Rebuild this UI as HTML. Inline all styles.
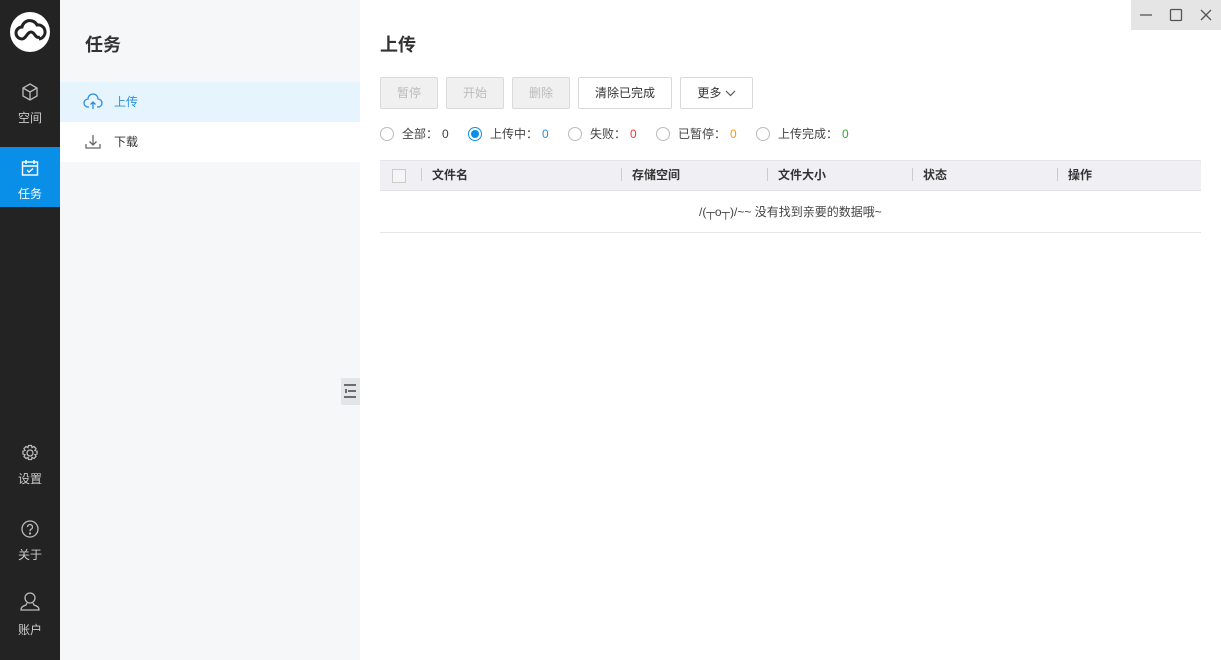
<!DOCTYPE html>
<html><head><meta charset="utf-8"><style>
*{margin:0;padding:0;box-sizing:border-box}
body{width:1221px;height:660px;overflow:hidden;font-family:"Liberation Sans","Noto Sans CJK SC",sans-serif;background:#fff;position:relative;color:#333}
.nav{position:absolute;left:0;top:0;width:60px;height:660px;background:#232323}
.logo{position:absolute;left:10px;top:12px;width:40px;height:40px;border-radius:50%;background:#fff}
.ni{position:absolute;left:0;width:60px;text-align:center;color:#ccc;font-size:12px}
.ni svg{display:block;margin:0 auto 7px}
.side{position:absolute;left:60px;top:0;width:300px;height:660px;background:#f6f7f9}
.ab{position:absolute;font-size:12px}
.btn{position:absolute;top:77px;height:32px;border:1px solid #d9d9d9;border-radius:2px;font-size:12px;text-align:center;line-height:30px;background:#fff;color:#333}
.dis{background:#f0f0f0;color:#bbb;border-color:#d9d9d9}
.rad{position:absolute;top:127px;width:14px;height:14px;border:1px solid #bbb;border-radius:50%;background:#fff}
.rl{position:absolute;top:127px;font-size:12px;line-height:15px;color:#444}
.th{position:absolute;top:166px;font-size:12px;font-weight:bold;color:#333}
.sep{position:absolute;top:168px;width:1px;height:13px;background:#ccc}
</style></head><body>
<div class="nav">
 <div class="logo"><svg width="40" height="40" viewBox="0 0 40 40"><path d="M12 27a6 6 0 0 1 0-12a8 8 0 0 1 15-2a6 6 0 0 1 2 14" fill="none" stroke="#222" stroke-width="3"/><path d="M12 27c4 0 5-7 9-7s4 7 9 5" fill="none" stroke="#222" stroke-width="3"/></svg></div>
 <div class="ni" style="top:82px"><svg width="20" height="20" viewBox="0 0 20 20" fill="none" stroke="#bbb" stroke-width="1.3"><path d="M10 2l7 4v8l-7 4-7-4V6z M3 6l7 4 7-4 M10 10v8"/></svg>空间</div>
 <div style="position:absolute;left:0;top:147px;width:60px;height:60px;background:#0a8fe8"></div>
 <div class="ni" style="top:158px;color:#fff"><svg width="20" height="20" viewBox="0 0 20 20" fill="none" stroke="#fff" stroke-width="1.4"><rect x="2.5" y="4" width="15" height="13"/><path d="M2.5 8h15M6 2v4M14 2v4M7 12l2 2 4-3.5"/></svg>任务</div>
 <div class="ni" style="top:443px"><svg width="20" height="20" viewBox="0 0 20 20" fill="none" stroke="#bbb" stroke-width="1.3"><circle cx="10" cy="10" r="3"/><path d="M8.5 2.5h3l.5 2 2-1 2 2-1 2 2 .5v3l-2 .5 1 2-2 2-2-1-.5 2h-3l-.5-2-2 1-2-2 1-2-2-.5v-3l2-.5-1-2 2-2 2 1z"/></svg>设置</div>
 <div class="ni" style="top:519px"><svg width="20" height="20" viewBox="0 0 20 20" fill="none" stroke="#bbb" stroke-width="1.3"><circle cx="10" cy="10" r="8"/><path d="M7.5 8a2.5 2.5 0 1 1 3.5 2.3c-.8.4-1 1-1 2"/><circle cx="10" cy="14.5" r=".5" fill="#bbb"/></svg>关于</div>
 <div class="ni" style="top:590px"><svg width="24" height="24" viewBox="0 0 24 24" fill="none" stroke="#bbb" stroke-width="1.3"><circle cx="12" cy="8" r="5"/><path d="M9 13l-1 2c-3 1-5 2-5 5h18c0-3-2-4-5-5l-1-2"/></svg>账户</div>
</div>
<div class="side">
 <div style="position:absolute;left:25px;top:31px;font-size:18px;font-weight:bold;color:#333">任务</div>
 <div style="position:absolute;left:0;top:82px;width:300px;height:40px;background:#e6f4fd"></div>
 <svg style="position:absolute;left:23px;top:92px" width="20" height="20" viewBox="0 0 20 20" fill="none" stroke="#2b8fe0" stroke-width="1.3"><path d="M6 15H5a4 4 0 0 1 0-8a5 5 0 0 1 10 0a4 4 0 0 1 0 8h-1M10 17V10M7.5 12.5L10 10l2.5 2.5"/></svg>
 <div class="ab" style="left:54px;top:93px;color:#2b8fe0">上传</div>
 <div style="position:absolute;left:0;top:122px;width:300px;height:40px;background:#fff"></div>
 <svg style="position:absolute;left:23px;top:132px" width="20" height="20" viewBox="0 0 20 20" fill="none" stroke="#666" stroke-width="1.3"><path d="M3 12v4h14v-4M10 3v10M6.5 9.5L10 13l3.5-3.5"/></svg>
 <div class="ab" style="left:54px;top:133px;color:#333">下载</div>
 <div style="position:absolute;left:281px;top:378px;width:19px;height:27px;background:#e4e5e8"></div>
 <svg style="position:absolute;left:283px;top:383px" width="14" height="16" viewBox="0 0 14 16" stroke="#444" stroke-width="1.5"><path d="M1 2h12M5 8h8M1 14h12M3 6v4"/></svg>
</div>
<div style="position:absolute;left:1131px;top:0;width:90px;height:30px;background:#e5e5e5"></div>
<svg style="position:absolute;left:1131px;top:0" width="90" height="30" fill="none" stroke="#555" stroke-width="1.3"><path d="M9 15h12"/><rect x="39.5" y="9.5" width="11" height="11" rx="1"/><path d="M70 10l10 10M80 10l-10 10"/></svg>
<div style="position:absolute;left:380px;top:31px;font-size:18px;font-weight:bold;color:#333">上传</div>
<div class="btn dis" style="left:380px;width:58px">暂停</div>
<div class="btn dis" style="left:446px;width:58px">开始</div>
<div class="btn dis" style="left:512px;width:58px">删除</div>
<div class="btn" style="left:578px;width:94px">清除已完成</div>
<div class="btn" style="left:680px;width:73px">更多 <svg width="11" height="7" viewBox="0 0 11 7" fill="none" stroke="#555" stroke-width="1.2"><path d="M1 1l4.5 4.5L10 1"/></svg></div>
<div class="rad" style="left:380px"></div><div class="rl" style="left:402px">全部：<span style="margin-left:4px">0</span></div>
<div class="rad" style="left:468px;border-color:#0a8fe8"><div style="margin:2px;width:8px;height:8px;border-radius:50%;background:#0a8fe8"></div></div><div class="rl" style="left:490px">上传中：<span style="margin-left:4px;color:#2b8fe0">0</span></div>
<div class="rad" style="left:568px"></div><div class="rl" style="left:590px">失败：<span style="margin-left:4px;color:#f33">0</span></div>
<div class="rad" style="left:656px"></div><div class="rl" style="left:678px">已暂停：<span style="margin-left:4px;color:#f90">0</span></div>
<div class="rad" style="left:756px"></div><div class="rl" style="left:778px">上传完成：<span style="margin-left:4px;color:#3a3">0</span></div>
<div style="position:absolute;left:380px;top:160px;width:821px;height:31px;background:#f0f0f4;border-top:1px solid #e5e5e8;border-bottom:1px solid #e2e2e6"></div>
<div style="position:absolute;left:392px;top:169px;width:14px;height:14px;border:1px solid #ccc;background:#f5f5f5"></div>
<div class="sep" style="left:421px"></div><div class="th" style="left:432px">文件名</div>
<div class="sep" style="left:621px"></div><div class="th" style="left:632px">存储空间</div>
<div class="sep" style="left:767px"></div><div class="th" style="left:778px">文件大小</div>
<div class="sep" style="left:912px"></div><div class="th" style="left:923px">状态</div>
<div class="sep" style="left:1057px"></div><div class="th" style="left:1068px">操作</div>
<div style="position:absolute;left:699px;top:203px;font-size:12px;color:#444;white-space:nowrap">/(┬o┬)/~~ 没有找到亲要的数据哦~</div>
<div style="position:absolute;left:380px;top:232px;width:821px;height:1px;background:#e5e5e5"></div>
</body></html>
